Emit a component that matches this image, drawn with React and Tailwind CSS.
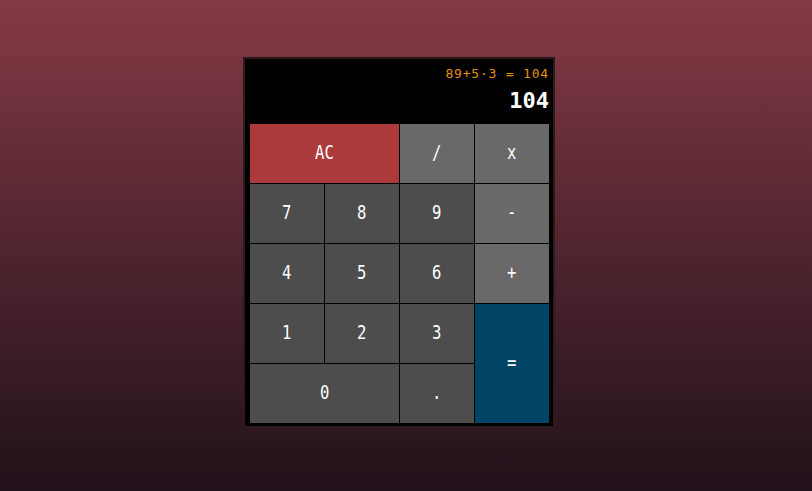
import React from 'react';

const keys = [
  { label: 'AC', span: 'col-span-2', tone: 'bg-[#ad3a3b]' },
  { label: '/', tone: 'bg-[#696969]' },
  { label: 'x', tone: 'bg-[#696969]' },
  { label: '7', tone: 'bg-[#4d4d4d]' },
  { label: '8', tone: 'bg-[#4d4d4d]' },
  { label: '9', tone: 'bg-[#4d4d4d]' },
  { label: '-', tone: 'bg-[#696969]' },
  { label: '4', tone: 'bg-[#4d4d4d]' },
  { label: '5', tone: 'bg-[#4d4d4d]' },
  { label: '6', tone: 'bg-[#4d4d4d]' },
  { label: '+', tone: 'bg-[#696969]' },
  { label: '1', tone: 'bg-[#4d4d4d]' },
  { label: '2', tone: 'bg-[#4d4d4d]' },
  { label: '3', tone: 'bg-[#4d4d4d]' },
  { label: '=', span: 'row-span-2', tone: 'bg-[#004466]' },
  { label: '0', span: 'col-span-2', tone: 'bg-[#4d4d4d]' },
  { label: '.', tone: 'bg-[#4d4d4d]' },
];

const App = () => {
  return (
    <div className="min-h-[491px] w-full bg-gradient-to-b from-[#853a45] to-[#21111a] pl-[243px] pt-[57px] font-['DejaVu_Sans_Mono',monospace]">
      <div className="h-[371px] w-[312px] border-2 border-[#2c1a1d] bg-black pl-[5px] pr-[4px] pt-[4px]">
        <div className="flex h-[61px] flex-col items-end">
          <p className="mt-[3px] text-[13px] leading-[16px] tracking-[0.8px] text-[#e0900f]">89+5·3 = 104</p>
          <p className="mt-[6px] text-[22px] font-bold leading-[26px] text-white">104</p>
        </div>
        <div className="grid w-[299px] grid-cols-[repeat(4,74px)] grid-rows-[repeat(5,59px)] gap-px">
          {keys.map((key) => (
            <button
              key={key.label}
              className={`${key.span || ''} ${key.tone} flex items-center justify-center pb-[3px] text-[19px] text-white`}
            >
              <span className="inline-block scale-x-[0.82]">{key.label}</span>
            </button>
          ))}
        </div>
      </div>
    </div>
  );
};

export default App;
